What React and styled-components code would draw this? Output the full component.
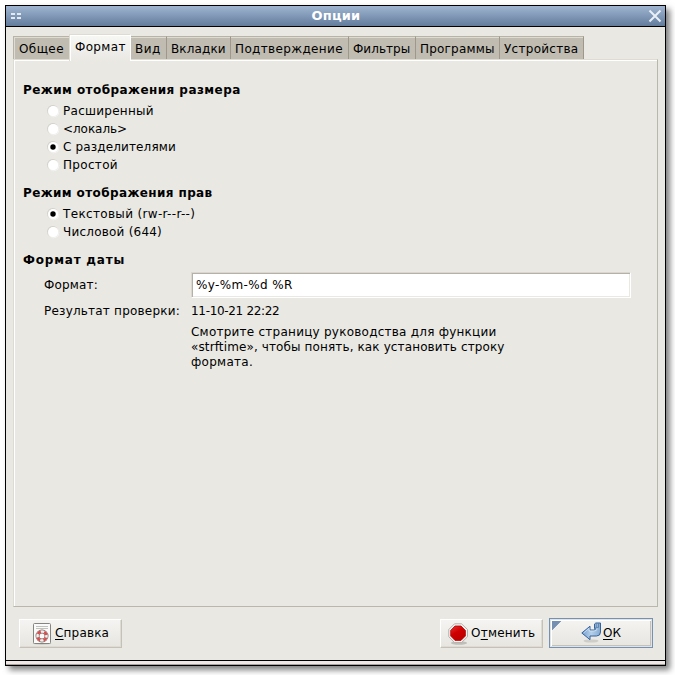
import React, { useState } from "react";
import styled, { createGlobalStyle } from "styled-components";

const Global = createGlobalStyle`
  * { box-sizing: border-box; }
  body {
    margin: 0;
    background: #fff;
    font: 12px/15px "DejaVu Sans", sans-serif;
    color: #000;
    overflow: hidden;
  }
`;

const Desktop = styled.div`
  width: 675px;
  height: 675px;
  padding: 5px;
  overflow: hidden;
`;

const Window = styled.div`
  width: 661px;
  height: 661px;
  border: 1px solid #000;
  display: flex;
  flex-direction: column;
  background: #e9e8e3;
  box-shadow: 4px 4px 6px rgba(0, 0, 0, 0.5);
`;

const TitleBar = styled.header`
  height: 21px;
  flex: none;
  display: flex;
  align-items: center;
  justify-content: space-between;
  padding: 0 3px 0 5px;
  border-bottom: 1px solid #000;
  background: linear-gradient(#9fb5d1, #637c9c);
`;

const Title = styled.h1`
  margin: 0 0 0 3px;
  font-size: 13px;
  line-height: 18px;
  color: #fff;
  letter-spacing: 0.2px;
`;

const TitleIcon = styled.svg`
  display: block;
  flex: none;
`;

const Body = styled.main`
  flex: 1;
  display: flex;
  flex-direction: column;
  padding: 7px 7px 0;
`;

const Tabs = styled.nav`
  display: flex;
  align-items: flex-end;
  height: 26px;
  position: relative;
  z-index: 1;
`;

const Tab = styled.button`
  appearance: none;
  width: ${(p) => p.$w}px;
  height: 23px;
  margin: 0 0 1px;
  padding: 2px 0 0 4px;
  border: 0;
  border-right: 1px solid #9d9888;
  border-top: 1px solid #b7b3a7;
  background: #c0bcb1;
  box-shadow: inset 0 1px #dedbd3, inset ${(p) => (p.$first ? "1px" : "0")} 0 #dedbd3;
  font: inherit;
  text-align: left;
  white-space: nowrap;
  letter-spacing: ${(p) => p.$ls || 0}px;
  ${(p) =>
    p.$beforeActive &&
    "border-right: 0; border-left: 1px solid #b7b3a7; padding-left: 5px;"}
  ${(p) =>
    p.$active &&
    `height: 27px;
     margin-bottom: -1px;
     padding: 0 0 1px 5px;
     border: 1px solid #dedbd3;
     border-bottom: 0;
     border-right-color: #fff;
     background: linear-gradient(#f7f7f5, #e9e8e3);
     box-shadow: inset 1px 1px #fff;`}
`;

const Panel = styled.section`
  height: 548px;
  border: 1px solid #b9b6ab;
  border-top-color: #dedbd3;
  border-left-color: #dedbd3;
  box-shadow: inset 1px 1px #fff;
  padding: 22px 26px 0 9px;
  margin-top: -1px;
`;

const Heading = styled.h2`
  margin: 0 0 4px;
  font-size: 12px;
  line-height: 16px;
  white-space: nowrap;
  letter-spacing: ${(p) => p.$ls || 0}px;
`;

const RadioList = styled.div`
  display: flex;
  flex-direction: column;
  padding: 0 0 11px 23px;
`;

const RadioRow = styled.label`
  display: flex;
  align-items: center;
  height: 18px;
  gap: 3px;
  padding-left: 1px;
  white-space: nowrap;
`;

const HiddenInput = styled.input`
  position: absolute;
  opacity: 0;
  pointer-events: none;
`;

const RadioText = styled.span`
  letter-spacing: ${(p) => p.$ls || 0}px;
`;

const DateGrid = styled.div`
  display: grid;
  grid-template-columns: 147px 440px;
  grid-template-rows: 26px 26px auto;
  align-items: center;
  padding-left: 21px;
`;

const Label = styled.span`
  white-space: nowrap;
  letter-spacing: ${(p) => p.$ls || 0}px;
`;

const Field = styled.input`
  width: 440px;
  height: 26px;
  padding: 0 4px;
  border: 1px solid #fff;
  border-top-color: #dad7cf;
  border-left-color: #dad7cf;
  background: #fff;
  box-shadow: inset 1px 1px #b5b0a8, inset -1px -1px #e9e8e3;
  font: inherit;
  outline: none;
  letter-spacing: ${(p) => p.$ls || 0}px;
`;

const Hint = styled.p`
  grid-column: 2;
  margin: 1px 0 0;
  white-space: nowrap;
`;

const HintLine = styled.span`
  display: block;
  letter-spacing: ${(p) => p.$ls || 0}px;
`;

const Footer = styled.footer`
  display: flex;
  align-items: center;
  padding: 11px 5px 0 6px;
`;

const Button = styled.button`
  appearance: none;
  display: flex;
  align-items: center;
  width: 103px;
  height: 29px;
  margin: 1px 0 0 ${(p) => p.$push || "0"};
  padding: 0 0 0 ${(p) => p.$pad}px;
  gap: ${(p) => p.$gap}px;
  border: 1px solid #fff;
  border-right-color: #c5c1b8;
  border-bottom-color: #c5c1b8;
  box-shadow: inset -1px -1px #dedbd3;
  background: linear-gradient(#f5f4f2, #e6e5e0);
  font: inherit;
  white-space: nowrap;
  letter-spacing: ${(p) => p.$ls || 0}px;
`;

const DefaultButton = styled(Button)`
  width: 104px;
  height: 30px;
  margin: 0 0 0 6px;
  border: 1px solid #7590b0;
  box-shadow: inset 0 0 0 1px #dfe3e6, inset 2px 2px #fff, inset -2px -2px #c5c1b8;
  background: linear-gradient(135deg, #7590b0 6.3px, transparent 6.9px) 2px 2px / 9px 9px
      no-repeat,
    linear-gradient(#f5f4f2, #e6e5e0);
`;

const Key = styled.span`
  text-decoration: underline;
  text-underline-offset: 2px;
  text-decoration-thickness: 1px;
  text-decoration-skip-ink: none;
`;

const Grip = styled.div`
  height: 5px;
  flex: none;
  border-top: 1px solid #000;
  border-bottom: 1px solid #aaa19e;
  background: #efe8e7;
`;

const Icon = styled.svg`
  display: block;
  flex: none;
`;

function RadioMark({ on }) {
  return (
    <Icon width="13" height="14" viewBox="0 0 13 14">
      <circle cx="6.4" cy="7.5" r="5.8" fill="#fff" />
      <circle cx="5.8" cy="6.8" r="5.8" fill="#d3d0c8" />
      <circle cx="6.4" cy="7.4" r="5.5" fill="#f1f0ed" />
      <circle cx="6.2" cy="7.1" r="5" fill="#fff" />
      {on && <circle cx="6" cy="7" r="2.7" fill="#000" />}
    </Icon>
  );
}

function HelpIcon() {
  return (
    <Icon width="20" height="22" viewBox="0 0 20 22">
      <ellipse cx="10" cy="20.5" rx="9.5" ry="1.2" fill="#c8c7c2" />
      <rect x="1.5" y="0.5" width="17" height="20" rx="1" fill="#fafafa" stroke="#85857f" />
      <path d="M4 3.5H16M4 5.5H16" stroke="#c2c2bc" />
      <circle cx="10" cy="13" r="4.5" fill="none" stroke="#77716f" strokeWidth="4" />
      <circle cx="10" cy="13" r="4.5" fill="none" stroke="#efeeeb" strokeWidth="2.6" />
      <circle
        cx="10"
        cy="13"
        r="4.5"
        fill="none"
        stroke="#df4b4b"
        strokeWidth="2.6"
        strokeDasharray="3.6 3.47"
        strokeDashoffset="-1.7"
      />
    </Icon>
  );
}

function StopIcon() {
  return (
    <Icon width="21" height="22" viewBox="0 0 21 22">
      <defs>
        <linearGradient id="stopRed" x2="0.6" y2="1">
          <stop offset="0" stopColor="#e93535" />
          <stop offset="0.5" stopColor="#cf0000" />
          <stop offset="1" stopColor="#bd0000" />
        </linearGradient>
      </defs>
      <ellipse cx="11" cy="20" rx="8" ry="1.8" fill="#bfbeb9" />
      <path d="M6.5 .8H13.5L19.5 6.5V13.8L13.5 19.6H6.5L.8 13.8V6.5Z" fill="#f5f5f3" stroke="#b1b0aa" />
      <path
        d="M7 3H13L17.4 7.4V13L13 17.4H7L2.7 13V7.4Z"
        fill="url(#stopRed)"
        stroke="#b50000"
        strokeWidth="0.8"
      />
    </Icon>
  );
}

function EnterIcon() {
  return (
    <Icon width="21" height="22" viewBox="0 0 21 22">
      <defs>
        <linearGradient id="enterBlue" x2="1">
          <stop offset="0" stopColor="#6f9dce" />
          <stop offset="0.5" stopColor="#b6d0ea" />
          <stop offset="1" stopColor="#86aad2" />
        </linearGradient>
      </defs>
      <ellipse cx="10" cy="19" rx="7.5" ry="1.6" fill="#cecdc8" />
      <path
        d="M.8 11L9 4.2V8H12.8Q14.6 8 14.6 6.6H13.5V2L14.8 1H19.5V10Q19.5 14 15.5 14H9V17.7Z"
        fill="url(#enterBlue)"
        stroke="#35639c"
        strokeLinejoin="round"
      />
      <path d="M13.8 6.3L15.2 5.4H17.5V1.5M15.2 1.5V5.4" fill="none" stroke="#54799f" strokeWidth="0.8" />
      <path d="M2.6 11L8.1 6.3V9H13Q16 9 16.2 6.5" fill="none" stroke="#d8e6f5" strokeWidth="0.7" />
    </Icon>
  );
}

const TABS = [
  { text: "Общее", w: 56, ls: 0.4 },
  { text: "Формат", w: 62, ls: 0.35 },
  { text: "Вид", w: 36, ls: 0.5 },
  { text: "Вкладки", w: 64, ls: 0.12 },
  { text: "Подтверждение", w: 118, ls: 0.36 },
  { text: "Фильтры", w: 67, ls: 0.03 },
  { text: "Программы", w: 84, ls: 0.2 },
  { text: "Устройства", w: 84, ls: 0.28 },
];

const SIZE_MODES = [
  { text: "Расширенный", ls: 0.27 },
  { text: "<локаль>", ls: -0.05 },
  { text: "С разделителями", ls: 0.14 },
  { text: "Простой", ls: 0.32 },
];

const PERMISSION_MODES = [
  { text: "Текстовый (rw-r--r--)", ls: 0.34 },
  { text: "Числовой (644)", ls: 0.22 },
];

function RadioGroup({ name, items, initial }) {
  const [value, setValue] = useState(initial);
  return (
    <RadioList>
      {items.map((item, i) => (
        <RadioRow key={item.text}>
          <HiddenInput type="radio" name={name} checked={value === i} onChange={() => setValue(i)} />
          <RadioMark on={value === i} />
          <RadioText $ls={item.ls}>{item.text}</RadioText>
        </RadioRow>
      ))}
    </RadioList>
  );
}

export default function App() {
  return (
    <Desktop>
      <Global />
      <Window>
        <TitleBar>
          <TitleIcon width="10" height="6" viewBox="0 0 10 6">
            <path d="M0 0h4v2H0zM6 0h4v2H6zM0 4h4v2H0zM6 4h4v2H6z" fill="#e3eaf3" />
          </TitleIcon>
          <Title>Опции</Title>
          <TitleIcon width="14" height="14" viewBox="0 0 14 14">
            <path d="M1.5 1.5L12.5 12.5M12.5 1.5L1.5 12.5" stroke="#e8eef6" strokeWidth="2" />
          </TitleIcon>
        </TitleBar>
        <Body>
          <Tabs>
            {TABS.map((t, i) => (
              <Tab
                key={t.text}
                $w={t.w}
                $ls={t.ls}
                $first={i === 0}
                $beforeActive={i === 0}
                $active={i === 1}
              >
                {t.text}
              </Tab>
            ))}
          </Tabs>
          <Panel>
            <Heading $ls={0.44}>Режим отображения размера</Heading>
            <RadioGroup name="size" items={SIZE_MODES} initial={2} />
            <Heading $ls={0.39}>Режим отображения прав</Heading>
            <RadioGroup name="permissions" items={PERMISSION_MODES} initial={0} />
            <Heading $ls={0.8}>Формат даты</Heading>
            <DateGrid>
              <Label $ls={0.18}>Формат:</Label>
              <Field $ls={0.38} defaultValue="%y-%m-%d %R" />
              <Label $ls={0.21}>Результат проверки:</Label>
              <Label $ls={-0.32}>11-10-21 22:22</Label>
              <Hint>
                <HintLine $ls={0.24}>Смотрите страницу руководства для функции</HintLine>
                <HintLine $ls={0.12}>«strftime», чтобы понять, как установить строку</HintLine>
                <HintLine $ls={0.28}>формата.</HintLine>
              </Hint>
            </DateGrid>
          </Panel>
          <Footer>
            <Button $pad={12} $gap={3} $ls={0.18}>
              <HelpIcon />
              <span>
                <Key>С</Key>правка
              </span>
            </Button>
            <Button $push="auto" $pad={7} $gap={2} $ls={0.22}>
              <StopIcon />
              <span>
                О<Key>т</Key>менить
              </span>
            </Button>
            <DefaultButton $pad={31} $gap={1}>
              <EnterIcon />
              <span>
                <Key>О</Key>К
              </span>
            </DefaultButton>
          </Footer>
        </Body>
        <Grip />
      </Window>
    </Desktop>
  );
}
